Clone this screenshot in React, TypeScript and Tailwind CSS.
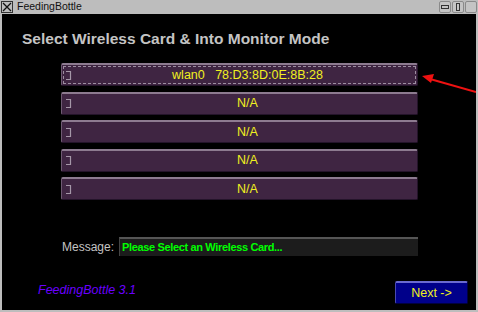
import React from 'react';

const rows = ['wlan0   78:D3:8D:0E:8B:28', 'N/A', 'N/A', 'N/A', 'N/A'];

function Corner() {
  return (
    <svg width="7" height="11" viewBox="0 0 7 11" className="shrink-0">
      <path d="M1 1.5 H5.5 V9.5 H1" fill="none" stroke="#a597a8" strokeWidth="1.2" />
    </svg>
  );
}

function TitleButton({ children }: { children?: React.ReactNode }) {
  return (
    <div className="w-[12px] h-[12px] border border-[#8a8a8a] rounded-[2px] bg-[#c4c4c4] flex items-center justify-center">
      {children}
    </div>
  );
}

export default function App() {
  return (
    <div
      className="w-[478px] h-[312px] bg-[#bdbdbd] flex flex-col overflow-hidden"
      style={{ fontFamily: '"Liberation Sans", Arial, sans-serif' }}
    >
      {/* title bar */}
      <div className="h-[13px] flex items-center px-[1px]">
        <div className="w-[12px] h-[12px] border border-[#333] flex items-center justify-center">
          <svg width="10" height="10" viewBox="0 0 10 10">
            <path d="M1 1 L9 9 M9 1 L1 9" stroke="#111" strokeWidth="1.3" />
          </svg>
        </div>
        <span className="ml-[4px] text-[10.5px] leading-none text-[#111]">FeedingBottle</span>
        <div className="ml-auto flex gap-[1px]">
          <TitleButton>
            <div className="w-[8px] h-[4px] border border-[#333]" />
          </TitleButton>
          <TitleButton>
            <div className="w-[4px] h-[8px] border border-[#333]" />
          </TitleButton>
          <TitleButton />
        </div>
      </div>

      {/* window body */}
      <div className="relative flex-1 bg-black mx-[2px] mb-[2px] mt-[1px] flex flex-col">
        <h1 className="pl-[20px] pt-[16px] text-[15.5px] font-bold text-[#c4c4c4] leading-[18px]">
          Select Wireless Card &amp; Into Monitor Mode
        </h1>

        <div className="ml-[59px] w-[357px] mt-[15px] flex flex-col gap-[5.5px]">
          {rows.map((r, i) => (
            <div
              key={i}
              className="relative h-[23px] bg-[#3f2542] border-t-2 border-t-[#8d7b90] border-l border-l-[#6e5a72] border-r border-r-[#24142a] border-b border-b-[#24142a] rounded-[2px] flex items-center"
            >
              {i === 0 && (
                <div className="absolute inset-[1px] border border-dashed border-[#9c8da0]" />
              )}
              <div className="pl-[3px]">
                <Corner />
              </div>
              <span className="flex-1 text-center pl-[6px] text-[12.5px] text-[#f0f020] whitespace-pre">
                {r}
              </span>
            </div>
          ))}
        </div>

        <div className="flex items-center mt-[37px] ml-[60px]">
          <span className="text-[12px] text-[#c4c4c4]">Message:</span>
          <div className="ml-[5px] w-[299px] h-[19px] bg-[#1c1c1c] border-t-2 border-t-[#555] border-l border-l-[#444] flex items-center pl-[2px]">
            <span className="text-[11px] font-bold text-[#00ff00] tracking-[-0.35px]">
              Please Select an Wireless Card...
            </span>
          </div>
        </div>

        <div className="flex items-start mt-[25px]">
          <span className="ml-[36px] italic text-[12.5px] leading-[18px] text-[#6a00ff]">FeedingBottle 3.1</span>
          <button className="ml-auto mr-[8px] w-[73px] h-[23px] bg-[#00008a] border-t-2 border-t-[#6a6ad0] border-l border-l-[#4a4ab0] border-r border-r-[#000040] border-b border-b-[#000040] rounded-[2px] text-[12.5px] text-[#f0f020]">
            Next -&gt;
          </button>
        </div>

        {/* red arrow overlay */}
        <svg className="absolute left-0 top-0" width="474" height="296" viewBox="0 0 474 296">
          <line x1="474" y1="78" x2="428" y2="65" stroke="#ee1111" strokeWidth="2" />
          <path d="M420 62 L432 60 L429 69 Z" fill="#ee1111" />
        </svg>
      </div>
    </div>
  );
}
